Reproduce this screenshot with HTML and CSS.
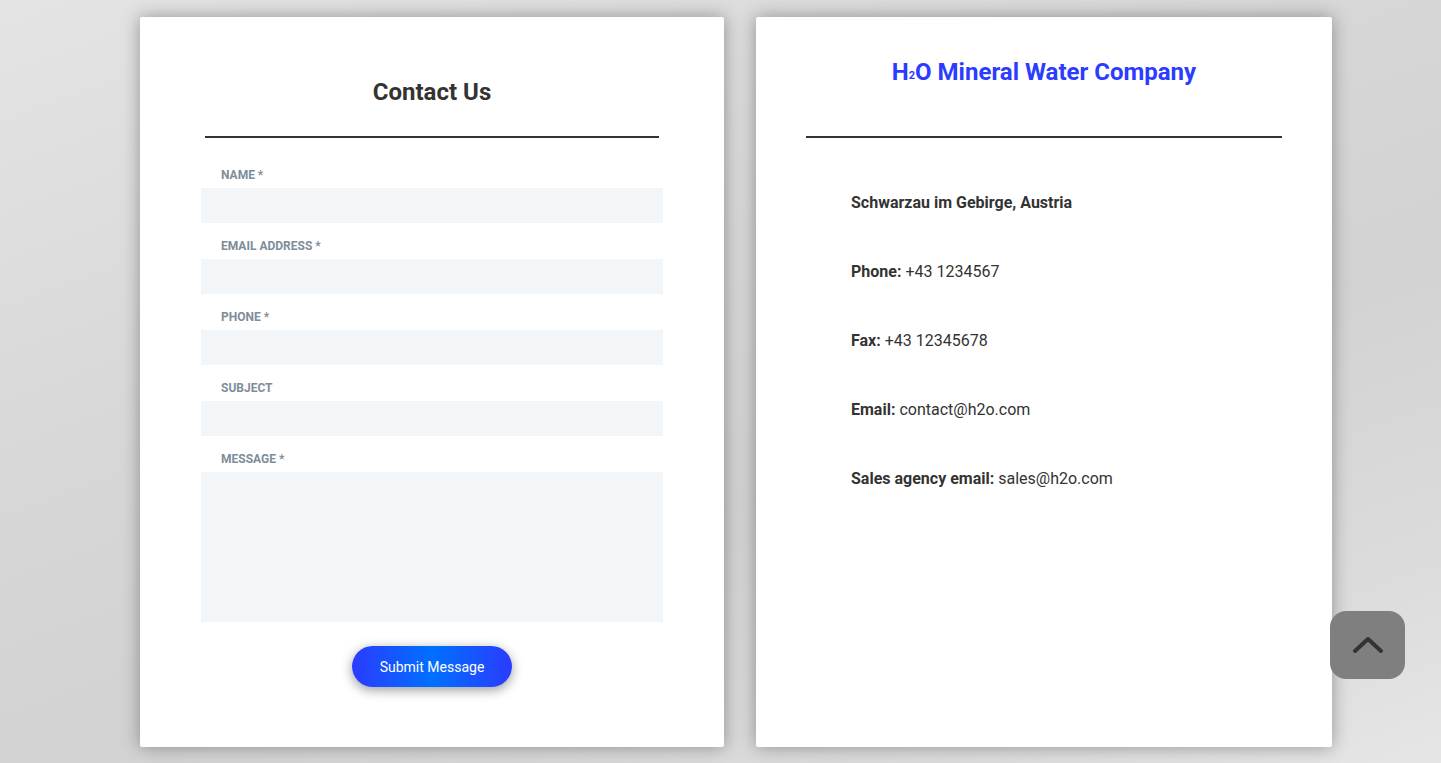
FILE: index.html
```html
<!DOCTYPE html>
<html lang="en">
<head>
<meta charset="utf-8">
<title>Contact Us</title>
<link rel="stylesheet" href="styles.css">
</head>
<body>
<main class="page">
  <section class="card card-form">
    <h2 class="form-title">Contact Us</h2>
    <div class="divider divider-form"></div>
    <form class="form">
      <label class="field-label">Name *</label>
      <div class="field"></div>
      <label class="field-label">Email Address *</label>
      <div class="field"></div>
      <label class="field-label">Phone *</label>
      <div class="field"></div>
      <label class="field-label">Subject</label>
      <div class="field"></div>
      <label class="field-label">Message *</label>
      <div class="field field-area"></div>
      <div class="btn-row"><button type="button" class="submit">Submit Message</button></div>
    </form>
  </section>
  <section class="card card-info">
    <h2 class="company">H<span class="sub">2</span>O Mineral Water Company</h2>
    <div class="divider divider-info"></div>
    <ul class="info">
      <li><b>Schwarzau im Gebirge, Austria</b></li>
      <li><b>Phone:</b> +43 1234567</li>
      <li><b>Fax:</b> +43 12345678</li>
      <li><b>Email:</b> contact@h2o.com</li>
      <li><b>Sales agency email:</b> sales@h2o.com</li>
    </ul>
  </section>
</main>
<a class="to-top" href="#">
  <svg width="34" height="22" viewBox="0 0 34 22"><path d="M4 17 L17 5 L30 17" fill="none" stroke="#333" stroke-width="4" stroke-linecap="round" stroke-linejoin="round"/></svg>
</a>
</body>
</html>
```
FILE: styles.css
```css
html, body { margin: 0; padding: 0; }
body {
  width: 1441px;
  height: 763px;
  overflow: hidden;
  font-family: Roboto, "Liberation Sans", sans-serif;
  background: linear-gradient(160deg, #e4e4e4 0%, #d8d8d8 35%, #d2d2d2 60%, #dcdcdc 85%, #e6e6e6 100%);
  color: #333;
}
.page {
  display: flex;
  gap: 32px;
  padding: 17px 0 0 140px;
}
.card {
  background: #fff;
  height: 730px;
  box-sizing: border-box;
  box-shadow: 0 0 18px rgba(0,0,0,0.35);
  border-radius: 2px;
}
.card-form { width: 584px; padding-top: 61px; }
.card-info { width: 576px; padding-top: 41px; }
.form-title, .company {
  margin: 0;
  font-size: 24px;
  line-height: 28px;
  font-weight: 700;
  text-align: center;
}
.form-title { color: #333; }
.company { color: #2b3cff; }
.sub {
  font-size: 11px;
  line-height: 0;
  vertical-align: 1px;
}
.divider { height: 2px; background: #333; }
.divider-form { margin: 30px 65px 0; }
.divider-info { margin: 50px 50px 0; }
.form {
  display: flex;
  flex-direction: column;
  margin: 30px 61px 0;
}
.field-label {
  font-size: 12px;
  line-height: 14px;
  font-weight: 700;
  text-transform: uppercase;
  color: #7d8d9a;
  padding-left: 20px;
  margin-bottom: 6px;
}
.field {
  height: 35px;
  background: #f3f6f9;
  margin-bottom: 15px;
}
.field + .field-label { margin-top: 1px; }
.field-area { height: 150px; margin-bottom: 24px; }
.btn-row { display: flex; justify-content: center; }
.submit {
  width: 160px;
  height: 41px;
  border: 0;
  border-radius: 21px;
  background: linear-gradient(90deg, #2b3cff 0%, #0070ff 50%, #2b3cff 100%);
  color: #fff;
  font-family: Roboto, "Liberation Sans", Arial, sans-serif;
  font-size: 14px;
  box-shadow: 0 3px 12px rgba(0,0,0,0.4);
  padding: 0;
}
.info {
  list-style: none;
  margin: 55px 0 0;
  padding: 0 0 0 95px;
  display: flex;
  flex-direction: column;
  gap: 49px;
}
.info li {
  font-size: 16px;
  line-height: 20px;
  color: #333;
}
.info b { font-weight: 700; }
.to-top {
  position: fixed;
  right: 36px;
  bottom: 84px;
  width: 75px;
  height: 68px;
  border-radius: 16px;
  background: #7f7f7f;
  display: flex;
  align-items: center;
  justify-content: center;
}
```
